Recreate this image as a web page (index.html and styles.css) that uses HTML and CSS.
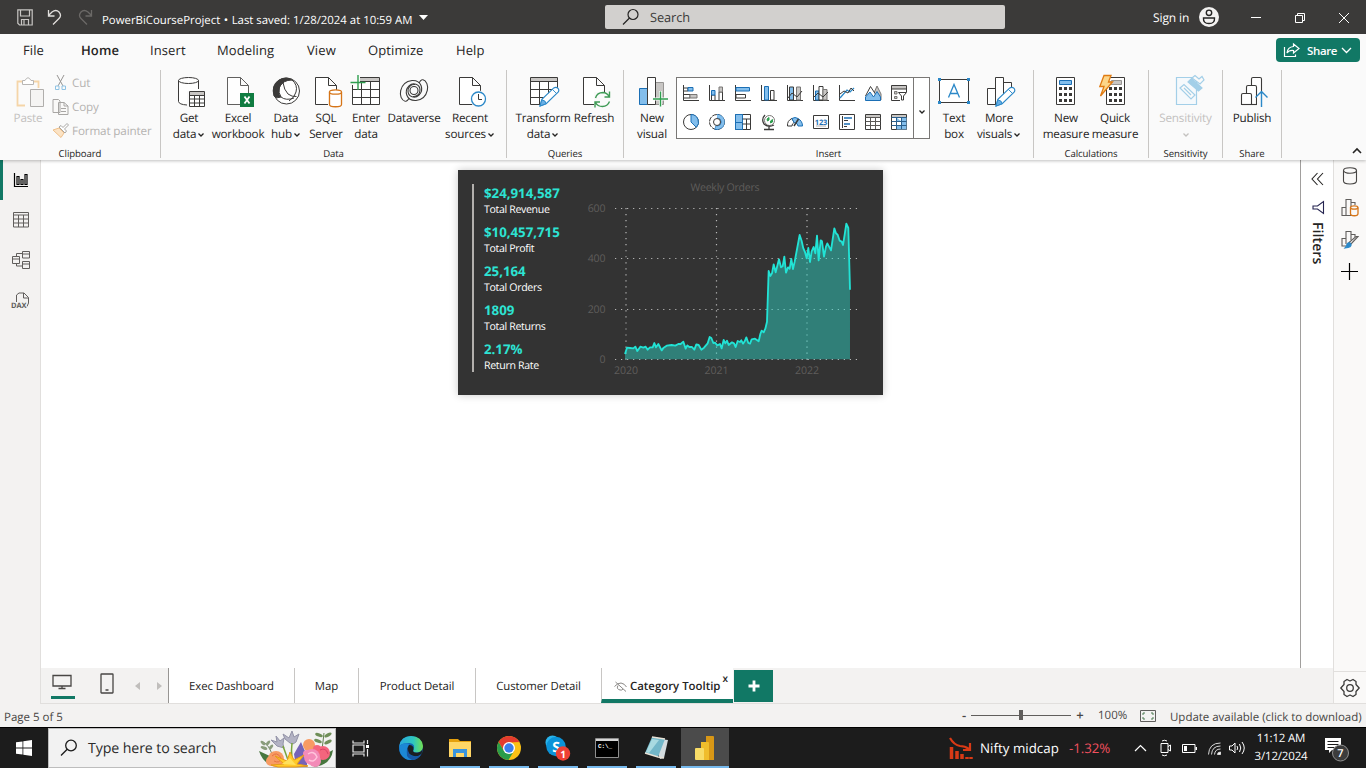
FILE: index.html
```html
<!DOCTYPE html>
<html lang="en">
<head>
<meta charset="utf-8">
<title>PowerBiCourseProject</title>
<link rel="stylesheet" href="styles.css">
</head>
<body>
<svg class="defs" width="0" height="0">
  <defs>
    <symbol id="page" viewBox="0 0 32 32"><path d="M5.500 1.500H18.500L26.500 9.500V28.500H5.500ZM18.500 1.500V9.500H26.500" fill="#fff" stroke="#3b3a39"/></symbol>
    <symbol id="chev" viewBox="0 0 8 6"><path d="M1.500 1.500L4 4L6.500 1.500" fill="none" stroke="currentColor" stroke-width="1.300"/></symbol>
    <symbol id="pencil" viewBox="0 0 22 22"><path d="M1 21L3 14L15.500 2Q18 .5 20 2.500Q21.500 4.500 20 6.500L7.500 18.500Z" fill="#fff" stroke="#2b88c8" stroke-width="1.200"/><path d="M1 21L3 14.500Q7 15 7.500 18.500Z" fill="#69afe5" stroke="#2b88c8"/><path d="M14 3.500L18.500 8" stroke="#2b88c8"/></symbol>
  </defs>
</svg>

<header class="titlebar">
  <div class="quick">
    <svg class="q-save" width="16" height="17" viewBox="0 0 16 17" fill="none" stroke="#c8c6c4" stroke-width="1.200"><path d="M.8 .8H15.200V16H2.500L.8 14.200ZM3.500 1V7H12.500V1M4.500 16V10.500H11.500V16M7 11V15.500"/></svg>
    <svg class="q-undo" width="16" height="17" viewBox="0 0 16 17" fill="none" stroke="#e1dfdd" stroke-width="1.300"><path d="M1.500 1V7H7.500M1.500 6.500L5 3Q9 0 12 3Q15 6.500 12 9.500L6 15.500"/></svg>
    <svg class="q-redo" width="16" height="17" viewBox="0 0 16 17" fill="none" stroke="#6b6967" stroke-width="1.300"><path d="M14.500 1V7H8.500M14.500 6.500L11 3Q7 0 4 3Q1 6.500 4 9.500L10 15.500"/></svg>
  </div>
  <div class="doc">PowerBiCourseProject<b>•</b>Last saved: 1/28/2024 at 10:59 AM</div>
  <svg class="doc-arrow" width="9" height="5" viewBox="0 0 9 5"><path d="M0 0H9L4.500 5Z" fill="#fff"/></svg>
  <div class="search">
    <svg width="18" height="18" viewBox="0 0 18 18" fill="none" stroke="#252423" stroke-width="1.200"><circle cx="11" cy="6.500" r="5"/><path d="M7.500 10L1 16.500"/></svg>
    <span>Search</span>
  </div>
  <div class="account"><span>Sign in</span>
    <svg width="20" height="20" viewBox="0 0 20 20"><circle cx="10" cy="10" r="10" fill="#f3f2f1"/><g fill="none" stroke="#252423" stroke-width="1.400"><circle cx="10" cy="5.800" r="2.700"/><path d="M4.500 11H15.500Q16 16.500 10 16.500Q4 16.500 4.500 11Z"/></g></svg>
  </div>
  <div class="window">
    <svg width="12" height="12" viewBox="0 0 12 12" stroke="#fff" fill="none"><path d="M1 5.500H11"/></svg>
    <svg width="12" height="12" viewBox="0 0 12 12" stroke="#fff" fill="none"><path d="M1.500 3.500H8.500V10.500H1.500ZM3.500 3V1.500H10.500V8.500H9"/></svg>
    <svg width="12" height="12" viewBox="0 0 12 12" stroke="#fff" fill="none"><path d="M1 1L11 11M11 1L1 11"/></svg>
  </div>
</header>

<nav class="menu">
  <span class="m1">File</span><span class="m2 on">Home</span><span class="m3">Insert</span><span class="m4">Modeling</span><span class="m5">View</span><span class="m6">Optimize</span><span class="m7">Help</span>
  <button class="share">
    <svg width="17" height="15" viewBox="0 0 17 15" fill="none" stroke="#fff" stroke-width="1.200"><path d="M1.500 4V13.500H12.500V11.500M10.500 1L16 5.500L10.500 10V7.500Q6 7 4 10Q4.500 4 10.500 3.500Z"/></svg>
    <span>Share</span>
    <svg width="11" height="7" viewBox="0 0 11 7" fill="none" stroke="#fff" stroke-width="1.300"><path d="M1 1L5.500 5.500L10 1"/></svg>
  </button>
</nav>

<section class="ribbon">
  <div class="group g-clip">
    <div class="row">
      <div class="btn off w-paste">
        <svg width="32" height="32" viewBox="0 0 32 32" fill="none"><path d="M13 29.500H5.500V5.500H11M20 5.500H26.500V12" stroke="#f5d5a8" stroke-width="1.800"/><path d="M10.500 8.500V4.500H13Q16 -1 19 4.500H21.500V8.500Z" fill="#fff" stroke="#b8b6b4"/><path d="M18.500 13.500H31.500V30.500H18.500Z" fill="#f5f4f3" stroke="#b0aeac"/></svg>
        <span>Paste</span>
      </div>
      <div class="small">
        <div><svg width="18" height="18" viewBox="0 0 18 18" fill="none" stroke="#979593"><path d="M5 1L11 12M12 1L6 12"/><path d="M3.500 12H7V15.500H3.500ZM10 12H13.500V15.500H10Z" stroke="#8fc3e4"/></svg><span>Cut</span></div>
        <div><svg width="18" height="18" viewBox="0 0 18 18" fill="#faf9f8" stroke="#a8a6a4"><path d="M1 1.500H6.500L8 3V14.500H1ZM6.500 4.500H12L16 8V16.500H6.500ZM12 4.500V8H16M9 10.500H14M9 13.500H14"/></svg><span>Copy</span></div>
        <div><svg width="18" height="18" viewBox="0 0 18 18" fill="none"><path d="M1 8L7 6L12 11L9 15.500Z" fill="#fbe3c5" stroke="#efc08a"/><path d="M7 5L13 11L14.500 9L12.500 7L16.500 3L15 1.500L11 5.500L9 3.500Z" fill="#fff" stroke="#a8a6a4"/></svg><span>Format painter</span></div>
      </div>
    </div>
    <div class="glabel">Clipboard</div>
  </div>

  <div class="group g-data">
    <div class="row">
      <div class="btn w50"><svg width="32" height="32" viewBox="0 0 32 32" fill="none" stroke="#3b3a39"><path d="M5.500 4.500V26Q6 29 14 29V15H25.500V4.500" fill="#fff" stroke="none"/><ellipse cx="15.500" cy="4.500" rx="10" ry="3" fill="#fff"/><path d="M5.500 4.500V25.500Q6 28.500 14 29M25.500 4.500V13"/><path d="M16.500 15.500H31.500V30.500H16.500Z" fill="#fff"/><path d="M17 16H31V19H17Z" fill="#c8c6c4" stroke="none"/><path d="M16.500 19.500H31.500M16.500 23H31.500M16.500 27H31.500M21.500 19V31M26.500 19V31"/></svg><span>Get<br>data<svg class="cv"><use href="#chev"/></svg></span></div>
      <div class="btn w48"><svg width="32" height="32" viewBox="0 0 32 32"><use href="#page" width="32" height="32" opacity=".8"/><path d="M18 17H32V31H18Z" fill="#107c41"/><path d="M22.500 20.500L27.500 27.500M27.500 20.500L22.500 27.500" stroke="#fff" stroke-width="1.800"/></svg><span>Excel<br>workbook</span></div>
      <div class="btn w48"><svg width="32" height="32" viewBox="0 0 32 32" fill="none" stroke="#3b3a39"><circle cx="16.500" cy="15" r="13" fill="#fff"/><path d="M4 20Q1 9 9 4Q16 0 22 4Q13 4 9.500 11Q8 17 11 21Q7 23 4 20Z" fill="#3b3a39"/><path d="M13 6.500Q14 14 18 18Q22 21 26.500 20.500M22 4Q28 9 26 16Q25 21 19 25M11 21Q16 25 24 22M9 12Q11 8 13 6.500"/></svg><span>Data<br>hub<svg class="cv"><use href="#chev"/></svg></span></div>
      <div class="btn w32"><svg width="32" height="32" viewBox="0 0 32 32"><use href="#page" width="32" height="32"/><path d="M18 15H32V32H18Z" fill="#fafafa"/><g fill="#fff" stroke="#d67518" stroke-width="1.300"><path d="M19.500 16V28.500C19.500 31.500 31.500 31.500 31.500 28.500V16"/><ellipse cx="25.500" cy="16" rx="6" ry="2.200"/></g></svg><span>SQL<br>Server</span></div>
      <div class="btn w48"><svg width="32" height="32" viewBox="0 0 32 32" fill="none" stroke="#3b3a39"><path d="M2.500 1.500H29.500V28.500H2.500Z" fill="#fff"/><path d="M3 2H29V5H3Z" fill="#c8c6c4" stroke="none"/><path d="M2.500 5.500H29.500M2.500 13.500H29.500M2.500 21.500H29.500M11.500 5V28.500M20.500 5V28.500"/><path d="M0 0H10V9H0Z" fill="#fafafa" stroke="none"/><path d="M8 -1V14M.5 6.500H15.500" stroke="#2f9e4f" stroke-width="1.400"/></svg><span>Enter<br>data</span></div>
      <div class="btn w48"><svg width="32" height="32" viewBox="0 0 32 32" fill="none" stroke="#3b3a39" stroke-width="1.100"><circle cx="16" cy="14.500" r="4"/><path d="M7.500 25.500C-1 23 1 6 14 4.500C24 4 26 14 21 19C17 23 10 21 10 15C10 11 13 8 17 8.500"/><path d="M24.500 3.500C33 6 31 23 18 24.500C8 25 6 15 11 10C15 6 22 8 22 14C22 18 19 21 15 20.500"/><path d="M21 7Q22.500 4 24.500 3.500M11 22.500Q9.500 25 7.500 25.500"/></svg><span>Dataverse</span></div>
      <div class="btn w64"><svg width="32" height="32" viewBox="0 0 32 32" fill="none"><use href="#page" width="32" height="32"/><circle cx="24.500" cy="23" r="8.500" fill="#fafafa"/><circle cx="24.500" cy="23" r="7" fill="#fff" stroke="#2b88c8" stroke-width="1.300"/><path d="M24.500 18V23.500H28" stroke="#3b3a39"/></svg><span>Recent<br>sources<svg class="cv"><use href="#chev"/></svg></span></div>
    </div>
    <div class="glabel">Data</div>
  </div>

  <div class="group g-queries">
    <div class="row">
      <div class="btn w56"><svg width="32" height="32" viewBox="0 0 32 32" fill="none" stroke="#3b3a39"><path d="M3.500 1.500H30.500V28.500H3.500Z" fill="#fff"/><path d="M4 2H30V5H4Z" fill="#c8c6c4" stroke="none"/><path d="M3.500 5.500H30.500M3.500 13.500H30.500M3.500 21.500H30.500M12.500 5V28.500M21.500 5V28.500"/><path d="M17 28L29 16H33V32H16Z" fill="#fafafa" stroke="none"/><use href="#pencil" x="12" y="10" width="21" height="21"/></svg><span>Transform<br>data<svg class="cv"><use href="#chev"/></svg></span></div>
      <div class="btn w46"><svg width="32" height="32" viewBox="0 0 32 32" fill="none"><use href="#page" width="32" height="32"/><path d="M16 16H33V32H16Z" fill="#fafafa"/><g stroke="#3f9b56" stroke-width="1.400"><path d="M17.500 22Q19 16.500 25 16.500Q29 16.700 31 20.500M31.500 15.500V21H26.500M31.500 25.500Q29.500 30.500 24.500 30.500Q19.500 30.500 17.500 26.500M17 31.500V26H22"/></g></svg><span>Refresh</span></div>
    </div>
    <div class="glabel">Queries</div>
  </div>

  <div class="group g-insert">
    <div class="row">
      <div class="btn w40"><svg width="32" height="32" viewBox="0 0 32 32" fill="none"><path d="M3.500 12.500H11.500V28.500H3.500Z" fill="#83beec" stroke="#1b6fb5"/><path d="M19.500 6.500H27.500V28.500H19.500Z" fill="#c8c6c4" stroke="#979593"/><path d="M11.500 1.500H19.500V28.500H11.500Z" fill="#fff" stroke="#3b3a39"/><path d="M24.500 15V31M16.500 23H32.500" stroke="#fafafa" stroke-width="3"/><path d="M24.500 15.500V30.500M17 23H32" stroke="#2f9e4f" stroke-width="1.400"/></svg><span>New<br>visual</span></div>
      <div class="gallery">
        <div class="grid">
          <svg viewBox="0 0 16 16"><path d="M.5 0V15.500H16" stroke="#3b3a39" fill="none"/><path d="M1 3H5V6H1" stroke="#3b3a39" fill="#fff"/><path d="M5 2.500H10V6H5Z" fill="#83beec" stroke="#1b6fb5"/><path d="M1 9.500H7V13H1" stroke="#3b3a39" fill="#fff"/><path d="M7 9.500H14V13H7Z" fill="#c8c6c4" stroke="#797775"/></svg>
          <svg viewBox="0 0 16 16"><path d="M.5 0V15.500H16" stroke="#3b3a39" fill="none"/><path d="M2.500 10H6V15.500H2.500ZM10 7H13.500V15.500H10Z" stroke="#3b3a39" fill="#fff"/><path d="M2.500 5.500H6V10H2.500Z" fill="#83beec" stroke="#1b6fb5"/><path d="M10 2H13.500V7H10Z" fill="#c8c6c4" stroke="#797775"/></svg>
          <svg viewBox="0 0 16 16"><path d="M.5 0V15.500H16" stroke="#3b3a39" fill="none"/><path d="M1 2.500H14.500V6H1Z" fill="#83beec" stroke="#1b6fb5"/><path d="M1 9.500H10.500V13H1Z" fill="#fff" stroke="#3b3a39"/></svg>
          <svg viewBox="0 0 16 16"><path d="M.5 0V15.500H16" stroke="#3b3a39" fill="none"/><path d="M3.500 1.500H7.500V15H3.500Z" fill="#83beec" stroke="#1b6fb5"/><path d="M9.500 5.500H13V15H9.500Z" fill="#fff" stroke="#3b3a39"/></svg>
          <svg viewBox="0 0 16 16"><path d="M.5 0V15.500H16" stroke="#3b3a39" fill="none"/><path d="M2.500 2H6.500V15H2.500Z" fill="#83beec" stroke="#3b3a39"/><path d="M9.500 2H13.500V15H9.500Z" fill="#c8c6c4" stroke="#797775"/><path d="M1 13L5 8L10 12L15 6" fill="none" stroke="#3b3a39"/></svg>
          <svg viewBox="0 0 16 16"><path d="M.5 0V15.500H16" stroke="#3b3a39" fill="none"/><path d="M2.500 6H6V15H2.500Z" fill="#83beec" stroke="#1b6fb5"/><path d="M6 1.500H10V15H6Z" fill="#fff" stroke="#3b3a39"/><path d="M10 4.500H14V15H10Z" fill="#c8c6c4" stroke="#797775"/><path d="M1 12L5 8L10 12L15 7" fill="none" stroke="#3b3a39"/></svg>
          <svg viewBox="0 0 16 16" fill="none"><path d="M.5 0V15.500H16" stroke="#3b3a39"/><path d="M1 13L8 5L11 7L15 3" stroke="#2b88c8" stroke-width="1.300"/><path d="M1 9L5 6L9 8L12 3L15 6" stroke="#3b3a39"/></svg>
          <svg viewBox="0 0 16 16"><path d="M6 15L12 1L16 9V15Z" fill="#c8c6c4" stroke="#797775"/><path d="M.5 11L5.500 1.500L13 13" fill="#fff" stroke="#3b3a39"/><path d="M.5 15.500V12L5 7L8.500 12L12 6.500L15.500 12V15.500Z" fill="#83beec" stroke="#1b6fb5"/></svg>
          <svg viewBox="0 0 16 16"><path d="M.5 .5H15.500V4H.5Z" fill="#c8c6c4" stroke="#3b3a39"/><path d="M.5 4V15.500H9M15.500 4V7" fill="none" stroke="#3b3a39"/><path d="M3.500 6.500H6V9H3.500ZM3.500 11.500H6V13.500H3.500Z" fill="#c8c6c4" stroke="#797775"/><path d="M7.500 7.500H15.500L12.500 11V15H10.500V11Z" fill="#fff" stroke="#3b3a39"/></svg>
          <svg viewBox="0 0 16 16"><circle cx="8" cy="8" r="7.500" fill="#fff" stroke="#3b3a39"/><path d="M8 8V.5A7.500 7.500 0 0 1 13.300 13.300Z" fill="#83beec" stroke="#1b6fb5"/></svg>
          <svg viewBox="0 0 16 16" fill="none"><circle cx="8" cy="8" r="7.500" fill="#fff" stroke="#3b3a39" stroke-dasharray="5 1"/><path d="M8 2.300A5.700 5.700 0 1 1 6 13.400" stroke="#1b6fb5" stroke-width="4.500"/><path d="M8 2.300A5.700 5.700 0 1 1 6.500 13.400" stroke="#83beec" stroke-width="3"/><circle cx="8" cy="8" r="3.500" fill="#fff" stroke="#3b3a39"/></svg>
          <svg viewBox="0 0 16 16"><path d="M.5 .5H15.500V15.500H.5Z" fill="#fff" stroke="#3b3a39"/><path d="M.5 .5H7.500V8.500H.5ZM.5 8.500H7.500V15.500H.5Z" fill="#83beec" stroke="#1b6fb5"/><path d="M7.500 5H15.500M7.500 10H15.500M11.500 5V15" stroke="#3b3a39"/></svg>
          <svg viewBox="0 0 16 16" fill="none"><circle cx="8.500" cy="6.500" r="5" fill="#fff" stroke="#797775"/><path d="M6 5L8 3.500V6L6.500 7ZM9.500 7L11.500 5.500V8L9.500 9Z" fill="#2f9e4f" stroke="#2f9e4f"/><path d="M4 1Q0 5 3 10Q7 14 13 11M8 13V15.500M3 15.500H13" stroke="#3b3a39" stroke-width="1.300"/></svg>
          <svg viewBox="0 0 16 16"><path d="M.5 12A7.500 7.500 0 0 1 5 4.500L7 8.500A4 4 0 0 0 5 12Z" fill="#fff" stroke="#3b3a39"/><path d="M5 4.500Q8 2.500 11 4.500Q15.500 7 15.500 12H11Q11 9 7 8.500Z" fill="#83beec" stroke="#1b6fb5"/><path d="M7 12L11.500 5" stroke="#3b3a39" stroke-width="1.500"/></svg>
          <svg viewBox="0 0 16 16"><path d="M.5 1.500H15.500V14.500H.5Z" fill="#fff" stroke="#3b3a39"/><text x="8" y="10.500" text-anchor="middle" class="n123">123</text><path d="M3 12H13" stroke="#a19f9d" stroke-width=".8"/></svg>
          <svg viewBox="0 0 16 16"><path d="M.5 .5H15.500V15.500H.5Z" fill="#fff" stroke="#3b3a39"/><path d="M3.500 2V14" stroke="#3b3a39"/><path d="M5 4H13M5 10H11" stroke="#1b6fb5" stroke-width="1.600"/><path d="M5 6.500H9M5 12.500H8" stroke="#3b3a39"/></svg>
          <svg viewBox="0 0 16 16"><path d="M.5 .5H15.500V15.500H.5Z" fill="#fff" stroke="#3b3a39"/><path d="M1 1H15V3H1Z" fill="#c8c6c4"/><path d="M.5 3.500H15.500M.5 7.500H15.500M.5 11.500H15.500M5.500 3V15M10.500 3V15" stroke="#5b5957"/></svg>
          <svg viewBox="0 0 16 16"><path d="M.5 .5H15.500V15.500H.5Z" fill="#fff" stroke="#3b3a39"/><path d="M1 1H15V3H1Z" fill="#c8c6c4"/><path d="M10.500 3.500H15.500V15.500H5.500V11.500H10.500Z" fill="#83beec"/><path d="M5.500 3.500V7.500H10.500" fill="#83beec"/><path d="M.5 3.500H15.500M.5 7.500H15.500M.5 11.500H15.500M5.500 3V15M10.500 3V15" stroke="#2b5f8c"/></svg>
        </div>
        <div class="drop"><svg class="cv"><use href="#chev"/></svg></div>
      </div>
      <div class="btn w40"><svg width="32" height="32" viewBox="0 0 32 32" fill="none"><path d="M1.500 3.500H30.500V26.500H1.500Z" fill="#fff" stroke="#3b3a39"/><path d="M0 2H3V5H0ZM29 2H32V5H29ZM0 25H3V28H0ZM29 25H32V28H29Z" fill="#2b88c8"/><path d="M10.500 21.500L16 8.500L21.500 21.500M12.500 17.500H19.500" stroke="#2b88c8" stroke-width="1.300"/></svg><span>Text<br>box</span></div>
      <div class="btn w50"><svg width="32" height="32" viewBox="0 0 32 32" fill="#fff" stroke="#3b3a39"><path d="M4.500 12.500H12.500V28.500H4.500ZM20.500 6.500H28.500V28.500H20.500ZM12.500 1.500H20.500V28.500H12.500Z"/><path d="M17 27L29 15H33V32H16Z" fill="#fafafa" stroke="none"/><use href="#pencil" x="12" y="10" width="21" height="21"/></svg><span>More<br>visuals<svg class="cv"><use href="#chev"/></svg></span></div>
    </div>
    <div class="glabel">Insert</div>
  </div>

  <div class="group g-calc">
    <div class="row">
      <div class="btn w50"><svg width="32" height="32" viewBox="0 0 32 32"><path d="M6.500 1.500H24.500V28.500H6.500Z" fill="#fff" stroke="#3b3a39"/><path d="M9.500 4.500H21.500V8.500H9.500Z" fill="#83beec" stroke="#1b6fb5"/><path d="M9 12.500H22M9 18.500H22M9 24.500H22" stroke="#3b3a39" stroke-width="3" stroke-dasharray="3 2"/></svg><span>New<br>measure</span></div>
      <div class="btn w48"><svg width="32" height="32" viewBox="0 0 32 32"><path d="M7.500 1.500H25.500V28.500H7.500Z" fill="#fff" stroke="#3b3a39"/><path d="M12.500 4.500H22.500V8.500H10.500Z" fill="#c8c6c4" stroke="#979593"/><path d="M10 12.500H23M10 18.500H23M10 24.500H23" stroke="#3b3a39" stroke-width="3" stroke-dasharray="3 2"/><path d="M5 -.5H12L9.500 6H13.500L1.500 20L5 10.500H.8Z" fill="#fcd68a" stroke="#e07b12" stroke-width="1.300"/></svg><span>Quick<br>measure</span></div>
    </div>
    <div class="glabel">Calculations</div>
  </div>

  <div class="group g-sens">
    <div class="row">
      <div class="btn off w73"><svg width="32" height="32" viewBox="0 0 32 32" fill="#fafafa" stroke="#a3cfe8" stroke-width="1.200"><path d="M6.500 1.500H26.500V28.500H6.500Z" fill="#f5f9fc"/><path d="M10 12L14 8.500L25 19L21 23ZM14 12L21 19" /><path d="M18 6L21.500 2.500L32 12L28.500 15Z" fill="#a3cfe8"/><path d="M22 2L25 -.5L29 3L32 .5L34 4L30 8Z"/></svg><span>Sensitivity<br><svg class="cv"><use href="#chev"/></svg></span></div>
    </div>
    <div class="glabel">Sensitivity</div>
  </div>

  <div class="group g-share">
    <div class="row">
      <div class="btn w58"><svg width="32" height="32" viewBox="0 0 32 32" fill="#fff" stroke="#3b3a39" stroke-width="1.100"><path d="M15.500 28.500V3Q15.500 1.500 17 1.500H24Q25.500 1.500 25.500 3V28.500Z"/><path d="M10.500 28.500V11Q10.500 9.500 12 9.500H19Q20.500 9.500 20.500 11V28.500Z"/><path d="M5.500 28.500V19Q5.500 17.500 7 17.500H14Q15.500 17.500 15.500 19V28.500Z"/><path d="M21 18H33V32H21Z" fill="#fafafa" stroke="none"/><path d="M5.500 28.500H21" /><path d="M25.500 31V15.500M19.500 21.500L25.500 15.500L31.500 21.500" fill="none" stroke="#2b88c8" stroke-width="1.400"/></svg><span>Publish</span></div>
    </div>
    <div class="glabel">Share</div>
  </div>
  <svg class="collapse" width="10" height="6" viewBox="0 0 10 6"><path d="M1 5L5 1L9 5" fill="none" stroke="#252423" stroke-width="1.600"/></svg>
</section>

<main class="work">
  <aside class="left">
    <div class="on"><svg width="16" height="16" viewBox="0 0 16 16" fill="none" stroke="#000" stroke-width="1.200"><path d="M1.500 1V14.500H15M4 12.500V4.500H6V12.500ZM8 12.500V7.500H10V12.500ZM12 12.500V2.500H14V12.500Z"/></svg></div>
    <div><svg width="16" height="16" viewBox="0 0 16 16" fill="none" stroke="#605e5c"><path d="M.5 .5H15.500V15H.5ZM.5 3H15.500M.5 7H15.500M.5 11H15.500M5.500 3V15M10.500 3V15"/></svg></div>
    <div><svg width="18" height="18" viewBox="0 0 18 18" fill="none" stroke="#605e5c"><path d="M.5 5.500H7.500V12.500H.5ZM.5 8H7.500M10.500 .5H17.500V7H10.500ZM10.500 3H17.500M10.500 10.500H17.500V17.500H10.500ZM10.500 13H17.500M4.500 5.500V2.500H10.500M4.500 12.500V15H10.500"/></svg></div>
    <div><svg width="18" height="18" viewBox="0 0 18 18" fill="none" stroke="#605e5c"><path d="M4.500 11V4L7 2H12L16.500 6.500V12L15 15.500M11.500 2V7H16.500"/><text x="-1" y="17" class="dax">DAX</text></svg></div>
  </aside>

  <div class="center">
    <div class="canvas">
      <article class="card">
        <ul class="kpis">
          <li><b>$24,914,587</b><span>Total Revenue</span></li>
          <li><b>$10,457,715</b><span>Total Profit</span></li>
          <li><b>25,164</b><span>Total Orders</span></li>
          <li><b>1809</b><span>Total Returns</span></li>
          <li><b>2.17%</b><span>Return Rate</span></li>
        </ul>
        <svg class="chart" width="310" height="225" viewBox="115 0 310 225">
          <g class="ctext"><text x="267" y="21" text-anchor="middle" textLength="69">Weekly Orders</text>
            <g text-anchor="end"><text x="147.500" y="42">600</text><text x="147.500" y="92">400</text><text x="147.500" y="143">200</text><text x="147.500" y="193">0</text></g>
            <g text-anchor="middle"><text x="168" y="204">2020</text><text x="258.500" y="204">2021</text><text x="349" y="204">2022</text></g></g>
          <path class="dots" d="M157 38.500H399M157 88.500H399M157 139.500H399M157 189.500H399M168 38V190M258.500 38V190M349 38V190"/>
          <g transform="translate(-8 -5) scale(.33333)">
            <path fill="#2de3d3" fill-opacity=".43" d="M525 567L531 548L540 549L550 550L556 545L562 558L571 545L580 548L587 545L593 554L600 547L608 547L613 534L618 547L625 537L635 556L641 548L650 542L665 540L676 542L685 537L692 537L700 530L707 551L712 541L718 546L726 546L733 554L739 538L746 540L754 554L762 548L773 535L779 516L784 519L790 534L795 533L802 541L810 537L815 550L821 525L826 535L831 527L836 540L846 532L852 535L857 546L863 528L870 531L874 526L879 536L884 529L889 517L895 534L900 536L905 523L915 521L926 529L931 507L935 497L941 502L946 491L951 470L956 318L961 333L966 325L971 298L977 322L987 283L993 307L998 304L1003 275L1008 323L1014 307L1019 311L1024 282L1029 312L1034 290L1049 210L1055 228L1060 250L1065 261L1070 280L1075 249L1080 291L1085 259L1091 246L1096 265L1101 212L1106 286L1112 226L1116 229L1122 275L1128 245L1132 235L1143 256L1153 190L1158 205L1163 209L1169 227L1175 230L1179 240L1184 209L1189 176L1195 189L1200 374V583H525Z"/>
            <path fill="none" stroke="#22e3d5" stroke-width="5.500" stroke-linejoin="round" d="M525 567L531 548L540 549L550 550L556 545L562 558L571 545L580 548L587 545L593 554L600 547L608 547L613 534L618 547L625 537L635 556L641 548L650 542L665 540L676 542L685 537L692 537L700 530L707 551L712 541L718 546L726 546L733 554L739 538L746 540L754 554L762 548L773 535L779 516L784 519L790 534L795 533L802 541L810 537L815 550L821 525L826 535L831 527L836 540L846 532L852 535L857 546L863 528L870 531L874 526L879 536L884 529L889 517L895 534L900 536L905 523L915 521L926 529L931 507L935 497L941 502L946 491L951 470L956 318L961 333L966 325L971 298L977 322L987 283L993 307L998 304L1003 275L1008 323L1014 307L1019 311L1024 282L1029 312L1034 290L1049 210L1055 228L1060 250L1065 261L1070 280L1075 249L1080 291L1085 259L1091 246L1096 265L1101 212L1106 286L1112 226L1116 229L1122 275L1128 245L1132 235L1143 256L1153 190L1158 205L1163 209L1169 227L1175 230L1179 240L1184 209L1189 176L1195 189L1200 374"/>
          </g>
        </svg>
      </article>
      <aside class="filters">
        <svg width="13" height="14" viewBox="0 0 13 14" fill="none" stroke="#252423" stroke-width="1.100"><path d="M6.500 1L1 7L6.500 13M12 1L6.500 7L12 13"/></svg>
        <svg width="13" height="13" viewBox="0 0 13 13" fill="none" stroke="#252450" stroke-width="1.100"><path d="M12.500 .5V12.500L6.500 8H2V5H6.500Z"/></svg>
        <span>Filters</span>
      </aside>
    </div>
    <div class="pages">
      <div class="views">
        <div class="on"><svg width="20" height="16" viewBox="0 0 20 16" fill="none" stroke="#484644" stroke-width="1.300"><path d="M1 1.500H19V12H1ZM10 12V14.500M6.500 14.500H13.500"/></svg></div>
        <svg class="phone" width="14" height="21" viewBox="0 0 14 21" fill="none" stroke="#484644" stroke-width="1.300"><path d="M1 1.500Q1 1 1.500 1H12.500Q13 1 13 1.500V19.500Q13 20 12.500 20H1.500Q1 20 1 19.500ZM5.500 17H8.500"/></svg>
        <svg class="prev" width="5" height="8" viewBox="0 0 5 8"><path d="M5 0V8L0 4Z" fill="#c0bebc"/></svg>
        <svg class="next" width="5" height="8" viewBox="0 0 5 8"><path d="M0 0V8L5 4Z" fill="#c0bebc"/></svg>
      </div>
      <div class="tab t1">Exec Dashboard</div><div class="tab t2">Map</div><div class="tab t3">Product Detail</div><div class="tab t4">Customer Detail</div>
      <div class="tab t5"><svg width="13" height="11" viewBox="0 0 13 11" fill="none" stroke="#8a8886"><path d="M.5 5.500Q3.500 2 7 2Q10.500 2.500 12.500 6M1.500 1L12 10.500M4 4.500Q2 8 6 9Q8 9.500 9 8"/></svg><b>Category Tooltip</b><i>x</i></div>
      <div class="add"><svg width="12" height="12" viewBox="0 0 12 12"><path d="M6 .5V11.500M.5 6H11.500" stroke="#fff" stroke-width="2.800"/></svg></div>
    </div>
  </div>

  <aside class="right">
    <svg width="16" height="18" viewBox="0 0 16 18" fill="none" stroke="#484644" stroke-width="1.100"><ellipse cx="8" cy="3.500" rx="6.500" ry="2.700"/><path d="M1.500 3.500V14C1.500 18 14.500 18 14.500 14V3.500"/></svg>
    <svg width="18" height="19" viewBox="0 0 18 19" fill="none" stroke="#605e5c" stroke-width="1.100"><path d="M1 9.500H5V17.500H1ZM5 1.500H10V17.500H5ZM10 4.500H14V7"/><g fill="#faf9f8" stroke="#d67518" stroke-width="1.300"><path d="M9.500 9.500V15.500C9.500 18.500 17 18.500 17 15.500V9.500"/><ellipse cx="13.200" cy="9.500" rx="3.700" ry="1.700"/></g></svg>
    <svg width="18" height="19" viewBox="0 0 18 19" fill="none" stroke="#605e5c" stroke-width="1.100"><path d="M5 16H1V8.500H5V14M5 13V1.500H10V10M10 4.500H14V7"/><path d="M17 6.500L10 14L8 12.500L15 6.500Z" fill="#fff"/><path d="M4 18Q6 16 6 14Q8 11.500 10 14Q11 17.500 4 18Z" fill="#2b88c8" stroke="#2b88c8"/></svg>
    <svg class="plus" width="17" height="17" viewBox="0 0 17 17" stroke="#000" stroke-width="1.200"><path d="M8.500 0V17M0 8.500H17"/></svg>
    <div class="gear"><svg width="20" height="20" viewBox="0 0 20 20" fill="none" stroke="#3b3a39" stroke-width="1.300"><path d="M7 1.500L10 3L13 1.500L16 3.500V6.500L19.200 10L16 13.500V16.500L13 18.500L10 17L7 18.500L4 16.500V13.500L.8 10L4 6.500V3.500Z" stroke-linejoin="round"/><circle cx="10" cy="10" r="3.300"/></svg></div>
  </aside>
</main>

<footer class="status">
  <span class="pg">Page 5 of 5</span>
  <div class="zoom"><b>-</b><div class="track"><i></i></div><b>+</b></div>
  <span class="pct">100%</span>
  <svg class="fit" width="16" height="12" viewBox="0 0 16 12" fill="none" stroke="#605e5c"><path d="M.5 .5H15.500V11.500H.5Z"/><path d="M5 3H3V5M11 3H13V5M3 7V9H5M13 7V9H11" stroke="#4a7a50"/></svg>
  <span class="upd">Update available (click to download)</span>
</footer>

<div class="taskbar">
  <div class="start"><svg width="16" height="16" viewBox="0 0 16 16" fill="#fff"><path d="M0 2.300L6.500 1.400V7.600H0ZM7.300 1.200L16 0V7.600H7.300ZM0 8.400H6.500V14.600L0 13.700ZM7.300 8.400H16V16L7.300 14.800Z"/></svg></div>
  <div class="tsearch">
    <svg width="18" height="18" viewBox="0 0 18 18" fill="none" stroke="#1b1b1b" stroke-width="1.300"><circle cx="11" cy="6.500" r="5.300"/><path d="M7.200 10.300L1 16.500"/></svg>
    <span>Type here to search</span>
    <svg class="flowers" width="76" height="37" viewBox="0 0 76 37">
      <path d="M1 21Q6 37 24 37L14 27ZM75 20Q73 35 56 37L62 27Z" fill="#47763e"/>
      <path d="M4 12Q10 13 14 24" stroke="#74866a" fill="none"/>
      <g fill="#8a9c7c"><ellipse cx="5" cy="13" rx="3" ry="1.500" transform="rotate(40 5 13)"/><ellipse cx="10" cy="13" rx="3" ry="1.500" transform="rotate(-50 10 13)"/><ellipse cx="6" cy="18" rx="3.500" ry="1.500" transform="rotate(20 6 18)"/><ellipse cx="13" cy="17" rx="3" ry="1.500" transform="rotate(-50 13 17)"/></g>
      <path d="M64 20L66 3" stroke="#60804f" fill="none"/>
      <g fill="#6f8f58"><ellipse cx="61" cy="5" rx="4" ry="1.700" transform="rotate(20 61 5)"/><ellipse cx="70" cy="5" rx="4" ry="1.700" transform="rotate(-30 70 5)"/><ellipse cx="60" cy="11" rx="4" ry="1.700" transform="rotate(20 60 11)"/><ellipse cx="70" cy="12" rx="4" ry="1.700" transform="rotate(-25 70 12)"/></g>
      <path d="M26 18L19 16L13 10L19 12L18 6L22 11L26 8L25 14ZM32 13L27 9L25 4L31 8L34 1L36 7L41 4L38 12L35 14Z" fill="#b3b3c4" stroke="#9494a8"/>
      <path d="M25 16L30 30M34 13Q33 20 34 29" stroke="#79a43d" stroke-width="1.500" fill="none"/>
      <path d="M38 37L36 24L40 17L43 12L46 19L49 25L49 37Z" fill="#7563b8"/>
      <g fill="#f89b63"><circle cx="18" cy="29" r="8"/><circle cx="51" cy="15" r="6"/><circle cx="13" cy="31" r="5"/></g><path d="M14 26Q19 21 23 28Q22 34 16 31" stroke="#e47343" fill="none"/>
      <g fill="#f4657d"><circle cx="65" cy="23" r="7"/><circle cx="59" cy="19" r="4"/></g><path d="M62 20Q68 17 70 24" stroke="#d94164" fill="none"/>
      <g fill="#f38bb8"><circle cx="54" cy="27" r="8"/><circle cx="49" cy="24" r="4"/><circle cx="57" cy="31" r="6"/></g><path d="M50 24Q56 20 59 27Q56 33 51 30" stroke="#ffc4dc" stroke-width="1.500" fill="none"/>
      <path d="M13 35L26 34L17 26L29 31L32 22L36 30L46 25L39 34L50 36L38 37H20Z" fill="#ffc928" stroke="#e69a19"/><path d="M24 34L32 28L38 35" fill="#ffe05c"/>
    </svg>
  </div>
  <div class="app tv"><svg width="18" height="17" viewBox="0 0 18 17" fill="none" stroke="#e8e8e8" stroke-width="1.200"><path d="M1 .5V3H12V.5M1 16.500V14H12V16.500M1 5H12V12H1ZM15.500 0V4M15.500 9V16.500"/><path d="M14 5H17V8H14Z" fill="#fff" stroke="none"/></svg></div>
  <div class="app"><svg width="24" height="24" viewBox="0 0 24 24"><defs><linearGradient id="eg" x1="0" x2="1"><stop offset="0" stop-color="#29a8df"/><stop offset=".6" stop-color="#2fc7be"/><stop offset="1" stop-color="#73e04f"/></linearGradient></defs><circle cx="12" cy="12" r="12" fill="#1267b4"/><path d="M.2 10Q2 0 12 0Q23 .5 24 10Q24 17 16 16.500Q13.500 16 14.500 13.500Q17 8 10.500 7Q4 6.500 .2 10Z" fill="url(#eg)"/><path d="M.2 10Q5 6 10.500 8Q7 12 8 17Q10 22 16 23.300Q7 26 2 18.500Q0 15 .2 10Z" fill="#1c88d6"/><path d="M10 9Q5 17 15 20Q19 21 22.500 18L24 12Q22 17.500 16.500 16.500Q13 16 14.500 13.500Q15 9 10 9Z" fill="#1b1e22"/><path d="M9 12Q8.500 19 15 20.500Q19 21 22.500 18Q19 24 13 24Q5 21 9 12Z" fill="#1657a5"/></svg></div>
  <div class="app run"><svg width="22" height="20" viewBox="0 0 22 20"><path d="M0 1H9L11 3H22V19H0Z" fill="#e5a00d"/><path d="M0 4H22V19H0Z" fill="#ffd666"/><path d="M4 11H18V19H15V15H7V19H4Z" fill="#3a94dc"/></svg></div>
  <div class="app run"><svg width="24" height="24" viewBox="0 0 24 24"><circle cx="12" cy="12" r="12" fill="#fbc116"/><path d="M1.600 6A12 12 0 0 1 22.400 6L12 6.500L7 15Z" fill="#e33b2e"/><path d="M1.600 6A12 12 0 0 0 11.500 24L17 15H7Z" fill="#2a9c4a"/><circle cx="12" cy="12" r="6" fill="#fff"/><circle cx="12" cy="12" r="4.700" fill="#3b7ded"/></svg></div>
  <div class="app run"><svg class="skype" width="26" height="26" viewBox="0 0 26 26"><circle cx="7.500" cy="7.500" r="7" fill="#28b4ec"/><circle cx="11" cy="11.500" r="9.700" fill="#0b93d8"/><text x="11" y="17" text-anchor="middle" class="sk">S</text><circle cx="18" cy="18.500" r="7.200" fill="#ee4034"/><text x="18" y="22.500" text-anchor="middle" class="skn">1</text></svg></div>
  <div class="app run"><svg width="24" height="20" viewBox="0 0 24 20"><path d="M.5 .5H23.500V19.500H.5Z" fill="#000" stroke="#8f8f8f"/><path d="M1 1H23V3H1Z" fill="#d6d6d6"/><text x="3" y="9.500" class="cmd">C:\_</text></svg></div>
  <div class="app run"><svg width="24" height="24" viewBox="0 0 24 24"><path d="M8 2L24 4L20 22L16 23Z" fill="#d4dce0"/><path d="M8 1L21 3L14 21L1 17Z" fill="#73b7c9"/><path d="M8 3L15 4L5 17L2 16Z" fill="#a9dae1"/><path d="M8 1L21 3M1 17L14 21L20 22" stroke="#e8e2d7" fill="none" stroke-width="1.500"/></svg></div>
  <div class="app run pbi"><svg width="20" height="24" viewBox="0 0 20 24"><path d="M11 0H18Q19 0 19 1V24H11Z" fill="#d89716"/><path d="M6 6H13Q14 6 14 7V24H6Z" fill="#f0bd2c"/><path d="M0 13Q0 12 1 12H8Q9 12 9 13V24H1Q0 24 0 23Z" fill="#f8dc67"/></svg></div>
  <div class="tray">
    <svg class="down" width="23" height="22" viewBox="0 0 23 22" fill="none" stroke="#d93a16" stroke-width="2.200"><path d="M1 1Q5 8 11 9Q16 9 20 12M14 13H21V6"/><path d="M2.500 10V22M8 14V22M13 17V22M18 20V22M22 20V22" stroke-width="3.500"/></svg>
    <span class="nifty">Nifty midcap</span><span class="loss">-1.32%</span>
    <svg class="up" width="13" height="8" viewBox="0 0 13 8" fill="none" stroke="#fff" stroke-width="1.200"><path d="M1 7L6.500 1.500L12 7"/></svg>
    <svg class="meet" width="11" height="16" viewBox="0 0 11 16" fill="none" stroke="#fff"><path d="M1 3.500H8V12.500H1ZM8 6.500L10.500 5V11L8 9.500M2 1Q4.500 -.5 7 1M2 15Q4.500 16.500 7 15"/></svg>
    <svg class="bat" width="15" height="9" viewBox="0 0 15 9"><path d="M.5 .5H13V8.500H.5Z" fill="none" stroke="#fff"/><path d="M2 2H5V7H2ZM13.500 3H15V6H13.500Z" fill="#fff"/></svg>
    <svg class="wifi" width="13" height="13" viewBox="0 0 13 13" fill="none" stroke="#d8d8d8"><path d="M.5 12.500Q1 1 12.500 1M3.500 12.500Q4 4 12.500 4M6.500 12.500Q7 7 12.500 7"/><path d="M9.500 12.500Q9.500 10 12.500 10V12.500Z" fill="#fff"/></svg>
    <svg class="vol" width="17" height="14" viewBox="0 0 17 14" fill="none" stroke="#fff"><path d="M.5 5H3L6 2V12L3 9H.5ZM8 5Q9.500 7 8 9M10.500 3Q13 7 10.500 11M13 1Q17.500 7 13 13"/></svg>
    <div class="clock"><span>11:12 AM</span><span>3/12/2024</span></div>
    <svg class="note" width="24" height="25" viewBox="0 0 24 25"><path d="M0 1H16V13H7L4 16V13H0Z" fill="#fff"/><path d="M2.500 4.500H13.500M2.500 7.500H13.500M2.500 10.500H9" stroke="#1c1c1c"/><circle cx="15.500" cy="16" r="8" fill="#3c3c3c" stroke="#909090"/><text x="15.500" y="20" text-anchor="middle" class="n7">7</text></svg>
  </div>
</div>
</body>
</html>
```
FILE: styles.css
```css
* { box-sizing: border-box; }
body { margin: 0; width: 1366px; height: 768px; overflow: hidden; display: flex; flex-direction: column; background: #fff; color: #252423; font-family: "Open Sans", "Noto Sans", sans-serif; font-size: 11.3px; letter-spacing: -.1px; text-rendering: geometricPrecision; white-space: nowrap; }
svg { display: block; flex: none; overflow: visible; }
.defs { position: absolute; }

.titlebar { height: 34px; flex: none; background: #3b3a39; color: #fff; display: flex; align-items: center; }
.quick { display: flex; width: 102px; padding-left: 17px; gap: 14px; }
.doc { width: 312px; padding-top: 6px; font-size: 11.4px; letter-spacing: -.01px; }
.doc b { margin: 0 4px; font-size: 9px; position: relative; top: -1px; }
.doc-arrow { margin-left: 5px; width: 9px; }
.search { margin-left: 177px; width: 400px; height: 24px; background: #d2d0ce; border-radius: 2px; display: flex; align-items: center; padding-left: 17px; gap: 10px; color: #3b3a39; font-size: 12.8px; }
.account { display: flex; align-items: center; margin-left: 147px; gap: 10px; font-size: 12px; }
.account span { width: 37px; padding-left: 1px; }
.window { display: flex; gap: 32px; margin-left: 31px; padding-top: 1px; }

.menu { height: 32px; flex: none; background: #fafafa; display: flex; align-items: center; font-size: 13px; letter-spacing: .1px; }
.menu .m1 { width: 58px; margin-left: 23px; }
.menu .m2 { width: 69px; }
.menu .m3 { width: 67px; }
.menu .m4 { width: 90px; }
.menu .m5 { width: 61px; }
.menu .m6 { width: 88px; }
.menu .m7 { width: 40px; }
.menu .on { font-weight: 600; }
.share { margin-left: auto; margin-right: 6px; width: 84px; height: 24px; padding: 0 8px 0 7px; border: 0; border-radius: 4px; background: #117865; color: #fff; display: flex; align-items: center; font: 600 11.5px "Open Sans", sans-serif; letter-spacing: -.4px; }
.share span { margin: 0 4px 0 auto; }

.ribbon { height: 94px; flex: none; background: #fafafa; display: flex; padding-top: 4px; box-shadow: 0 1px 3px rgba(0,0,0,.25); clip-path: inset(0 0 -6px 0); position: relative; z-index: 2; }
.group { height: 88px; border-right: 1px solid #c8c6c4; display: flex; flex-direction: column; }
.row { height: 78px; display: flex; padding-top: 6px; }
.glabel { text-align: center; font-size: 9.6px; line-height: 11px; height: 10px; letter-spacing: -.08px; }
.btn { display: flex; flex-direction: column; align-items: center; }
.btn > span { line-height: 16px; margin-top: 2px; text-align: center; font-size: 11.7px; letter-spacing: -.2px; }
.cv { display: inline-block; width: 8px; height: 6px; margin-left: 1px; }
.off { color: #c3c1bf; }
.w32 { width: 32px; } .w40 { width: 40px; } .w46 { width: 46px; } .w48 { width: 48px; } .w50 { width: 50px; }
.w56 { width: 56px; } .w58 { width: 58px; } .w64 { width: 64px; } .w73 { width: 73px; } .w-paste { width: 35px; }
.g-clip { width: 161px; }
.g-clip .row { padding-left: 10.5px; }
.small { margin-left: 6.5px; color: #b5b3b1; font-size: 11.7px; letter-spacing: -.15px; margin-top: -5px; }
.small div { display: flex; align-items: center; height: 24px; gap: 2px; }
.small svg { margin-top: -1px; }
.g-data { width: 346px; } .g-data .row { padding-left: 3px; }
.g-queries { width: 117px; } .g-queries .row { padding-left: 8px; }
.g-insert { width: 410px; } .g-insert .row { padding-left: 8px; }
.g-calc { width: 115px; } .g-calc .row { padding-left: 7px; }
.g-sens { width: 74px; } .g-share { width: 59px; }
.gallery { margin: 1px 4px 0; width: 254px; height: 62px; border: 1px solid #797775; background: #fff; display: flex; }
.grid { width: 237px; display: grid; grid-template-columns: repeat(9, 26px); grid-template-rows: 29px 29px; padding: 0 1px 2px; justify-items: center; align-items: center; border-right: 1px solid #797775; }
.grid svg { width: 16px; height: 16px; }
.drop { flex: 1; display: flex; align-items: center; justify-content: center; padding-top: 8px; }
.n123 { font: bold 7.5px "Open Sans", sans-serif; fill: #1b6fb5; letter-spacing: -.2px; }
.collapse { margin: 78px 0 0 70px; }

.work { flex: 1; display: flex; min-height: 0; }
.left { width: 41px; background: #f3f2f1; border-right: 1px solid #e1dfdd; }
.left div { height: 40px; display: flex; align-items: center; justify-content: center; border-left: 3px solid transparent; padding-right: 2px; }
.left .on { border-color: #117865; }
.dax { font: bold 7.5px "Open Sans", sans-serif; fill: #605e5c; stroke: #f3f2f1; stroke-width: 1.5px; paint-order: stroke; }
.center { width: 1292px; display: flex; flex-direction: column; }
.canvas { height: 508px; display: flex; justify-content: space-between; padding-left: 417px; }
.card { width: 425px; height: 225px; margin-top: 10px; background: #333; box-shadow: 0 0 8px rgba(0,0,0,.22); display: flex; }
.kpis { list-style: none; margin: 14px 0 0 14px; padding: 1px 0 0 10px; border-left: 2px solid #b3b0ad; width: 101px; height: 188px; }
.kpis li { height: 39px; color: #fff; }
.kpis b { display: block; color: #2de3d3; font-size: 13.3px; line-height: 17px; letter-spacing: -.02px; }
.kpis span { display: block; font-size: 10.6px; line-height: 17px; letter-spacing: -.34px; }
.ctext { font: 10.6px "Open Sans", sans-serif; fill: #5f5d5b; }
.dots { fill: none; stroke: #b8b8b8; stroke-width: 1.2; stroke-dasharray: 1.2 4.82; }
.filters { width: 33px; border-left: 1px solid #a19f9d; display: flex; flex-direction: column; align-items: center; padding-top: 12px; }
.filters svg + svg { margin-top: 15px; }
.filters span { writing-mode: vertical-rl; margin-top: 8px; font-size: 14px; font-weight: 600; letter-spacing: .1px; line-height: 18px; }

.pages { height: 36px; background: #f3f2f1; border-bottom: 1px solid #e1dfdd; display: flex; }
.views { width: 127px; display: flex; padding-left: 10px; }
.views .on { width: 24px; height: 31px; border-bottom: 3px solid #117865; padding: 6px 2px 0 1px; }
.phone { margin: 5px 0 0 25px; }
.prev { margin: 14px 0 0 21px; }
.next { margin: 14px 0 0 17px; }
.tab { height: 35px; background: #fff; border-left: 1px solid #c8c6c4; display: flex; align-items: center; justify-content: center; font-size: 11.4px; letter-spacing: -.08px; padding-top: 1px; }
.t1 { width: 126px; border-color: #979593; } .t2 { width: 64px; } .t3 { width: 117px; } .t4 { width: 126px; }
.t5 { width: 132px; border-bottom: 4px solid #117865; padding: 5px 0 0 12px; justify-content: flex-start; }
.t5 b { font-weight: 600; margin-left: 3px; letter-spacing: 0; }
.t5 i { font-style: normal; font-weight: 600; font-size: 10px; margin: -17px 0 0 2px; }
.add { width: 39px; height: 32px; margin: 2px 0 0 1px; background: #117865; display: flex; align-items: center; justify-content: center; }

.right { width: 33px; background: #faf9f8; border-left: 1px solid #e1dfdd; display: flex; flex-direction: column; align-items: center; padding-top: 7px; gap: 13px; }
.plus { margin: 1px 2px 0 0; }
.gear { margin-top: auto; width: 32px; height: 33px; border-top: 1px solid #e1dfdd; border-bottom: 1px solid #e1dfdd; display: flex; align-items: center; justify-content: center; }

.status { height: 23px; flex: none; background: #f3f2f1; display: flex; align-items: center; color: #484644; padding-top: 3px; font-size: 11.5px; letter-spacing: 0; }
.pg { width: 958px; padding-left: 4px; }
.zoom { display: flex; align-items: center; width: 128px; gap: 5px; padding-left: 4px; font-size: 13px; }
.zoom b { font-weight: 600; line-height: 12px; margin-top: -5px; }
.track { width: 100px; height: 10px; margin-top: -4px; display: flex; justify-content: center; background: linear-gradient(#605e5c, #605e5c) 0 50% / 100% 1px no-repeat; }
.track i { width: 4px; height: 10px; background: #605e5c; }
.pct { margin-left: 12px; width: 42px; margin-top: -3px; }
.fit { margin-top: -3px; }
.upd { margin-left: 14px; letter-spacing: -.02px; }

.taskbar { height: 41px; flex: none; background: #1c1c1c; border-top: 1px solid #000; display: flex; color: #fff; }
.start { width: 48px; display: flex; align-items: center; justify-content: center; }
.tsearch { width: 288px; height: 40px; background: #f2f2f2; border: 1px solid #bdbdbd; display: flex; align-items: center; padding-left: 11px; color: #2b2b2b; font-size: 14.2px; letter-spacing: -.11px; }
.tsearch span { width: 129px; margin-left: 10px; padding-top: 1px; }
.flowers { margin-left: 41px; margin-top: 1px; }
.app { width: 49px; display: flex; align-items: center; justify-content: center; padding-top: 3px; border-bottom: 3px solid transparent; }
.tv { width: 50px; }
.run { background: linear-gradient(#76b9ed, #76b9ed) 50% 100% / 40px 2px no-repeat border-box; }
.pbi { width: 48px; margin-left: 1px; background: linear-gradient(#76b9ed, #76b9ed) 0 100% / 48px 2px no-repeat border-box #4b4b4b; }
.sk { font: bold 14px "Open Sans", sans-serif; fill: #fff; }
.skn { font: bold 10px "Open Sans", sans-serif; fill: #fff; }
.cmd { font: bold 6px "Liberation Mono", monospace; fill: #fff; }
.n7 { font: 600 11px "Open Sans", sans-serif; fill: #fff; }
.tray { margin-left: auto; width: 417px; display: flex; align-items: center; font-size: 13.3px; letter-spacing: .04px; }
.nifty { width: 79px; margin-left: 8px; }
.loss { color: #f1515f; width: 44px; margin-left: 10px; letter-spacing: -.08px; }
.up { margin-left: 21px; } .meet { margin-left: 13px; } .bat { margin-left: 11px; } .wifi { margin-left: 11px; } .vol { margin-left: 8px; }
.clock { width: 54px; margin-left: 8px; display: flex; flex-direction: column; align-items: center; font-size: 11.5px; line-height: 18px; letter-spacing: -.18px; }
.note { margin-left: 17px; margin-top: 3px; }
```
